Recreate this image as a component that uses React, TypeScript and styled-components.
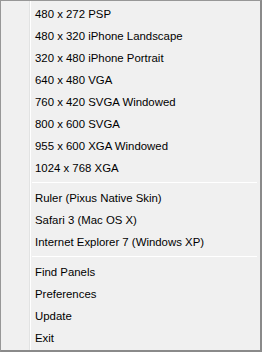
import React from "react";
import styled, { createGlobalStyle } from "styled-components";

const Global = createGlobalStyle`
  html, body { margin: 0; padding: 0; background: #f0f0f0; }
  body { font-family: "Liberation Sans", Arial, sans-serif; }
`;

const Menu = styled.div`
  box-sizing: border-box;
  width: 262px;
  height: 352px;
  background: #f0f0f0;
  border: 1px solid #979797;
  border-right-width: 2px;
  border-bottom-width: 2px;
  border-right-color: #8a8a8a;
  border-bottom-color: #8a8a8a;
  padding: 2px 2px 2px 2px;
  display: flex;
  flex-direction: column;
  position: relative;
`;

const Gutter = styled.div`
  position: absolute;
  top: 0;
  bottom: 0;
  left: 28px;
  width: 1px;
  background: #e2e3e3;
  border-right: 1px solid #ffffff;
`;

const Item = styled.div`
  height: 22px;
  line-height: 22px;
  padding-left: 32px;
  font-family: "Liberation Sans", Arial, sans-serif;
  font-size: 11.4px;
  color: #000;
  white-space: nowrap;
`;

const Sep = styled.div`
  margin: 3px 1px 4px 29px;
  height: 1px;
  background: #e0e0e0;
  border-bottom: 1px solid #ffffff;
`;

const groups = [
  [
    "480 x 272 PSP",
    "480 x 320 iPhone Landscape",
    "320 x 480 iPhone Portrait",
    "640 x 480 VGA",
    "760 x 420 SVGA Windowed",
    "800 x 600 SVGA",
    "955 x 600 XGA Windowed",
    "1024 x 768 XGA",
  ],
  ["Ruler (Pixus Native Skin)", "Safari 3 (Mac OS X)", "Internet Explorer 7 (Windows XP)"],
  ["Find Panels", "Preferences", "Update", "Exit"],
];

export default function App() {
  return (
    <>
      <Global />
      <Menu>
        <Gutter />
        {groups.map((g, gi) => (
          <React.Fragment key={gi}>
            {gi > 0 && <Sep />}
            {g.map((t) => (
              <Item key={t}>{t}</Item>
            ))}
          </React.Fragment>
        ))}
      </Menu>
    </>
  );
}
